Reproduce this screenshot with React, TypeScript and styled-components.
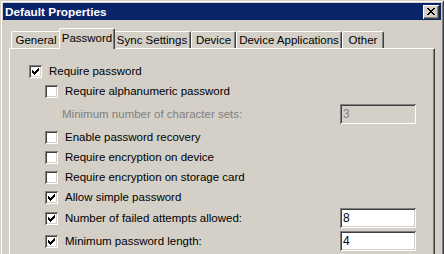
import React from 'react'
import styled, { createGlobalStyle } from 'styled-components'

const GlobalStyle = createGlobalStyle`
    html, body {
        margin: 0;
        padding: 0;
        overflow: hidden;
        background: #d4d0c8;
    }
    body {
        font-family: "Liberation Sans", Arial, sans-serif;
        font-size: 11.5px;
        color: #000;
    }
`

const FACE = '#d4d0c8'
const SHADOW = '#808080'
const DARK = '#404040'

const Window = styled.div`
    width: 444px;
    height: 290px;
    box-sizing: border-box;
    padding: 3px 3px 0;
    background: ${FACE};
    display: flex;
    flex-direction: column;
    box-shadow: inset 1px 1px 0 ${FACE}, inset -1px -1px 0 ${DARK},
        inset 2px 2px 0 #fff, inset -2px -2px 0 ${SHADOW};
`

const TitleBar = styled.div`
    height: 17px;
    background: #0a246a;
    display: flex;
    align-items: center;
    justify-content: space-between;
    padding-left: 2px;
    color: #fff;
    font-weight: bold;
    font-size: 11.8px;
`

const CloseButton = styled.div`
    width: 16px;
    height: 14px;
    margin-right: 2px;
    background: ${FACE};
    display: flex;
    align-items: center;
    justify-content: center;
    box-shadow: inset 1px 1px 0 #fff, inset -1px -1px 0 ${DARK},
        inset -2px -2px 0 ${SHADOW};
`

const Body = styled.div`
    flex: 1;
    display: flex;
    flex-direction: column;
    padding: 0 6px;
`

const TabStrip = styled.div`
    display: flex;
    align-items: flex-end;
    height: 20px;
    margin-top: 8px;
    padding-left: 2px;
`

const Tab = styled.div<{ $w: number; $active?: boolean }>`
    box-sizing: border-box;
    width: ${p => p.$w}px;
    height: ${p => (p.$active ? 21 : 17)}px;
    margin: ${p => (p.$active ? '0 -2px -1px' : '0')};
    position: ${p => (p.$active ? 'relative' : 'static')};
    z-index: ${p => (p.$active ? 1 : 0)};
    background: ${FACE};
    border-top: 1px solid #fff;
    border-left: 1px solid #fff;
    border-right: 1px solid ${DARK};
    border-radius: 2px 2px 0 0;
    box-shadow: inset -1px 0 0 ${SHADOW};
    display: flex;
    align-items: center;
    justify-content: center;
    padding-bottom: ${p => (p.$active ? 2 : 0)}px;
    white-space: nowrap;
`

const Panel = styled.div`
    flex: 1;
    border-top: 1px solid #fff;
    border-left: 1px solid #fff;
    border-right: 1px solid ${DARK};
    box-shadow: inset -1px 0 0 ${SHADOW};
    padding: 12px 18px 0 19px;
`

const Row = styled.div<{ $indent?: number; $gap?: number }>`
    height: 20px;
    display: flex;
    align-items: center;
    margin-left: ${p => p.$indent || 0}px;
    margin-top: ${p => p.$gap || 0}px;
`

const Box = styled.span`
    width: 13px;
    height: 13px;
    flex: none;
    background: #fff;
    display: flex;
    align-items: center;
    justify-content: center;
    box-shadow: inset 1px 1px 0 ${SHADOW}, inset -1px -1px 0 #fff,
        inset 2px 2px 0 ${DARK}, inset -2px -2px 0 ${FACE};
`

const Label = styled.span<{ $disabled?: boolean }>`
    margin-left: ${p => (p.$disabled ? 0 : 7)}px;
    color: ${p => (p.$disabled ? SHADOW : '#000')};
    white-space: nowrap;
`

const Field = styled.div<{ $disabled?: boolean }>`
    box-sizing: border-box;
    width: 76px;
    height: 20px;
    margin-left: auto;
    padding: 0 3px;
    display: flex;
    align-items: center;
    background: ${p => (p.$disabled ? FACE : '#fff')};
    color: ${p => (p.$disabled ? SHADOW : '#000')};
    font-size: 12px;
    box-shadow: inset 1px 1px 0 ${SHADOW}, inset -1px -1px 0 #fff,
        inset 2px 2px 0 ${DARK}, inset -2px -2px 0 ${FACE};
`

const tickRows = [
    [[6, 1]],
    [[5, 2]],
    [[0, 1], [4, 3]],
    [[0, 2], [3, 3]],
    [[0, 5]],
    [[1, 3]],
    [[2, 1]],
]

const Tick = () => (
    <svg width="7" height="7" viewBox="0 0 7 7" shapeRendering="crispEdges">
        {tickRows.map((row, y) =>
            row.map(([x, w]) => <rect key={`${y}-${x}`} x={x} y={y} width={w} height={1} fill="#000" />)
        )}
    </svg>
)

const crossRows = [
    [[0, 2], [6, 2]],
    [[1, 2], [5, 2]],
    [[2, 4]],
    [[3, 2]],
    [[2, 4]],
    [[1, 2], [5, 2]],
    [[0, 2], [6, 2]],
]

const Cross = () => (
    <svg width="8" height="7" viewBox="0 0 8 7" shapeRendering="crispEdges">
        {crossRows.map((row, y) =>
            row.map(([x, w]) => <rect key={`${y}-${x}`} x={x} y={y} width={w} height={1} fill="#000" />)
        )}
    </svg>
)

interface ICheckProps {
    label: string,
    checked?: boolean,
}

const Check = ({ label, checked }: ICheckProps) => (
    <>
        <Box>{checked && <Tick />}</Box>
        <Label>{label}</Label>
    </>
)

const tabs = [
    { name: 'General', w: 50 },
    { name: 'Password', w: 56, active: true },
    { name: 'Sync Settings', w: 78 },
    { name: 'Device', w: 45 },
    { name: 'Device Applications', w: 106 },
    { name: 'Other', w: 42 },
]

const App = () => {
    return (
        <>
            <GlobalStyle />
            <Window>
                <TitleBar>
                    <span>Default Properties</span>
                    <CloseButton><Cross /></CloseButton>
                </TitleBar>
                <Body>
                    <TabStrip>
                        {tabs.map(t => (
                            <Tab key={t.name} $w={t.w} $active={t.active}>{t.name}</Tab>
                        ))}
                    </TabStrip>
                    <Panel>
                        <Row>
                            <Check label="Require password" checked />
                        </Row>
                        <Row $indent={16}>
                            <Check label="Require alphanumeric password" />
                        </Row>
                        <Row $indent={33} $gap={3}>
                            <Label $disabled>Minimum number of character sets:</Label>
                            <Field $disabled>3</Field>
                        </Row>
                        <Row $indent={16} $gap={3}>
                            <Check label="Enable password recovery" />
                        </Row>
                        <Row $indent={16}>
                            <Check label="Require encryption on device" />
                        </Row>
                        <Row $indent={16}>
                            <Check label="Require encryption on storage card" />
                        </Row>
                        <Row $indent={16}>
                            <Check label="Allow simple password" checked />
                        </Row>
                        <Row $indent={16} $gap={1}>
                            <Check label="Number of failed attempts allowed:" checked />
                            <Field>8</Field>
                        </Row>
                        <Row $indent={16} $gap={3}>
                            <Check label="Minimum password length:" checked />
                            <Field>4</Field>
                        </Row>
                    </Panel>
                </Body>
            </Window>
        </>
    )
}

export default App
